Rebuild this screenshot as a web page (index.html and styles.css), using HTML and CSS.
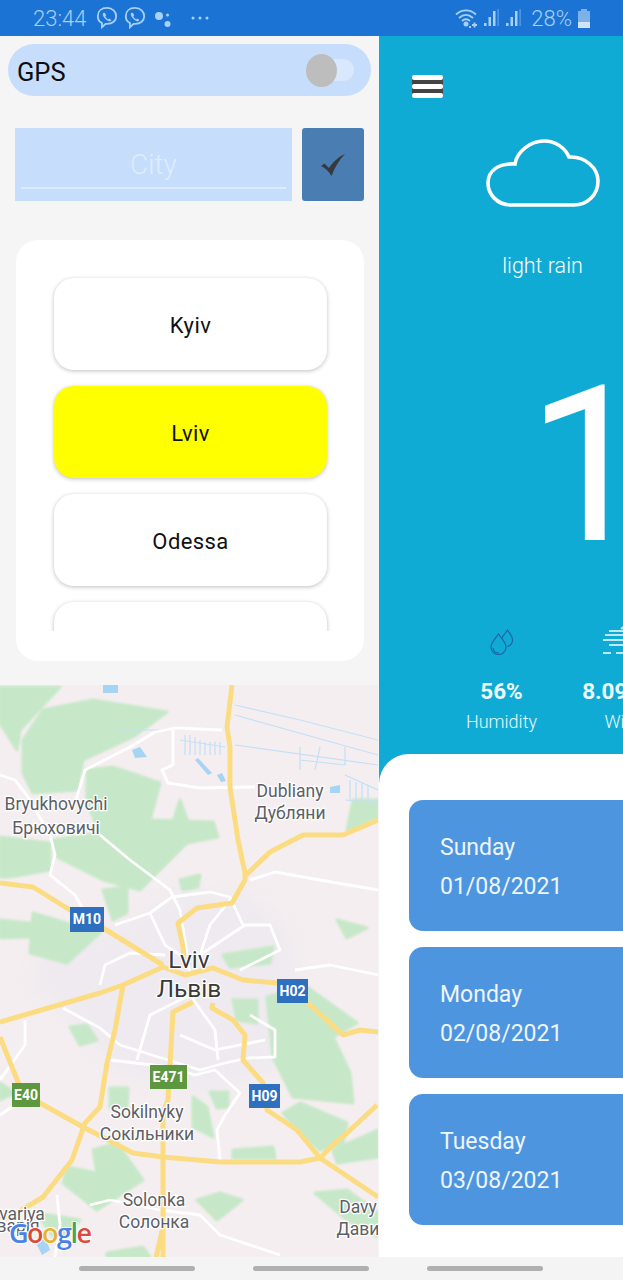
FILE: index.html
```html
<!DOCTYPE html>
<html lang="en">
  <head>
    <meta charset="utf-8" />
    <title>Weather</title>
    <link rel="stylesheet" href="styles.css">
  </head>
  <body>
    <header class="statusbar">
      <div class="status-left">
        <span class="clock">23:44</span>
        <svg class="viber" viewBox="0 0 24 26"><path d="M12 2C6 2 2 5.500 2 11c0 3.500 1.500 6 4.500 7.500V23l4-3.600h1.500c6 0 10-3.400 10-8.400S18 2 12 2z"/><path class="phone" d="M8 7.500c-1 1-.8 2.500.5 4.500s3.500 4 5.500 4.500c1.300.3 2.300-.3 2.700-1.300l-2.200-1.700-1.200 1c-1.400-.6-2.600-2-3.100-3.300l1-1.200L9.500 7.200c-.6-.1-1.100 0-1.500.3z"/></svg>
        <svg class="viber" viewBox="0 0 24 26"><path d="M12 2C6 2 2 5.500 2 11c0 3.500 1.500 6 4.500 7.500V23l4-3.600h1.500c6 0 10-3.400 10-8.400S18 2 12 2z"/><path class="phone" d="M8 7.500c-1 1-.8 2.500.5 4.500s3.500 4 5.500 4.500c1.300.3 2.300-.3 2.700-1.300l-2.200-1.700-1.200 1c-1.400-.6-2.600-2-3.100-3.300l1-1.200L9.500 7.200c-.6-.1-1.100 0-1.500.3z"/></svg>
        <svg class="assistant" viewBox="0 0 18 22"><circle cx="5" cy="8" r="4"/><circle cx="13.500" cy="7" r="1.500"/><circle cx="13.500" cy="16" r="3"/></svg>
        <svg class="more" viewBox="0 0 18 4"><circle cx="2" cy="2" r="1.500"/><circle cx="9" cy="2" r="1.500"/><circle cx="16" cy="2" r="1.500"/></svg>
      </div>
      <div class="status-right">
        <svg class="wifi" viewBox="0 0 24 20"><path d="M1 6.500C7 1 15 1 21 6.500M4 10c4.500-4 9.500-4 14 0M7 13c2.500-2.200 5.500-2.200 8 0"/><circle cx="11" cy="16" r="1.600"/><path d="M17 17h5M19.500 14.500v5M14 19h2"/></svg>
        <svg class="signal" viewBox="0 0 16 20"><rect x="0" y="15" width="2.500" height="3"/><rect x="4.500" y="9" width="2.500" height="9"/><rect x="9" y="3" width="2.500" height="15"/><rect x="13.500" y="1" width="1.200" height="17" opacity=".5"/></svg>
        <svg class="signal" viewBox="0 0 16 20"><rect x="0" y="15" width="2.500" height="3"/><rect x="4.500" y="9" width="2.500" height="9"/><rect x="9" y="3" width="2.500" height="15"/><rect x="13.500" y="1" width="1.200" height="17" opacity=".5"/></svg>
        <span class="battery-text">28%</span>
        <div class="battery"><div class="battery-nub"></div><div class="battery-body"><div class="battery-fill"></div></div></div>
      </div>
    </header>

    <div class="panes">
      <aside class="drawer">
        <div class="gps-row">
          <span>GPS</span>
          <div class="toggle"><div class="toggle-thumb"></div></div>
        </div>

        <form class="city-form">
          <div class="city-input"><span class="city-placeholder">City</span></div>
          <button class="city-ok" type="button">
            <svg viewBox="0 0 26 24"><path d="M1 13l3.500-2.500L9 15C13 9 18 4 25 1c-6 6-10 13-13.500 22C9 18.500 5 15 1 13z"/></svg>
          </button>
        </form>

        <div class="city-card">
          <div class="city-list">
            <div class="city-item">Kyiv</div>
            <div class="city-item selected">Lviv</div>
            <div class="city-item">Odessa</div>
            <div class="city-item"></div>
          </div>
        </div>

        <svg class="map" viewBox="0 0 378 572">
          <rect width="378" height="572" fill="#f5eef0"/>
          <path class="city-area" d="M110 245l70-40 70 5 40 40 10 60-20 70-70 30-90-20-50-60-40-30 10-30z"/>
          <g class="green">
            <polygon points="23,55 43,25 93,15 167,27 133,52 83,75 77,105 33,108 23,88"/>
            <polygon points="0,2 60,2 20,45 17,65 0,38"/>
            <polygon points="87,85 113,82 160,98 150,135 213,137 218,152 187,158 160,185 140,205 103,195 57,172 53,155 100,148 87,118"/>
            <polygon points="0,152 50,158 50,185 10,192 0,192"/>
            <polygon points="33,228 100,248 67,278 30,268"/>
            <polygon points="0,235 30,238 30,252 0,253"/>
            <polygon points="103,205 127,202 127,228 113,235"/>
            <polygon points="347,145 353,115 378,115 378,132"/>
            <polygon points="337,235 367,243 347,253"/>
            <polygon points="223,270 273,262 270,278 230,282"/>
            <polygon points="267,312 307,302 357,338 333,352 350,388 353,418 293,412 273,372"/>
            <polygon points="283,428 300,418 347,438 343,458 320,465 297,445"/>
            <polygon points="333,465 378,445 378,472 337,478"/>
            <polygon points="93,465 117,458 143,495 97,525 63,498 67,482 97,488"/>
            <polygon points="197,515 220,508 242,515 217,535"/>
            <polygon points="233,465 273,462 275,473 233,473"/>
            <polygon points="315,508 347,505 378,528 378,552 347,535"/>
            <polygon points="107,568 143,562 150,572 107,572"/>
            <polygon points="70,342 87,340 97,355 80,360"/>
            <polygon points="110,403 128,403 127,422 110,423"/>
            <polygon points="210,407 228,407 228,422 217,423"/>
            <polygon points="193,412 207,422 213,452 193,442"/>
            <polygon points="233,315 257,315 257,338 237,335"/>
            <polygon points="0,398 15,408 0,415"/>
            <polygon points="37,528 80,535 57,558"/>
            <polygon points="180,195 200,190 198,202 183,205"/>
            <polygon points="172,140 180,115 190,142 188,152"/>
          </g>
          <g class="water-lines">
            <path d="M235 20l65 15 78 20M235 30l143 40M180 55l45 7M235 60l143 20M300 62v23M320 62l-5 23M345 62v18M345 90l33 15M345 115l33 3"/>
            <path d="M185 50v20M190 50v20M195 52v18M200 55v15M205 57v13M210 57v13M215 57v13M220 57v13M350 95v20M356 97v20M362 98v20M368 100v18"/>
            <path d="M300 75l45 5M120 45h40"/>
          </g>
          <g class="water">
            <polygon points="103,0 118,0 118,8 103,8"/>
            <polygon points="132,65 140,62 147,72 135,73"/>
            <polygon points="195,75 198,73 212,88 208,90"/>
            <polygon points="217,90 222,88 226,96 221,97"/>
            <polygon points="330,102 340,100 340,108 330,108"/>
            <polygon points="37,560 45,552 50,565 42,570"/>
          </g>
          <g class="roads-small">
            <path d="M0 90l15 5 13 17 22 38 5 20-5 20 25 20 10 18"/>
            <path d="M75 118l10-33 45-23 25-15 20-4 47 2"/>
            <path d="M173 45v35l-11 5 6 13 32 5 55-1"/>
            <path d="M100 150l30 25 40 30 10 20 5 30 5 35"/>
            <path d="M250 195l25-8 45 8 58 10"/>
            <path d="M115 240l35-12 22-16 38-5 20 5 13 28h27l10 25-40 20"/>
            <path d="M150 228l15 32 15 10h20l10-30 20-25M200 270l45-30M295 285l35-5 48 10"/>
            <path d="M100 300l5-20 25-12 35 2"/>
            <path d="M63 323l22 12 15 8 20 17 80 25 25-7 23-5 27-1v-27l-25-15"/>
            <path d="M110 375l60 7 25 8 20-5 25 23-15 22-8 15 3 30"/>
            <path d="M137 375l13-45 40-20 25 35 3 30M180 350l35 15 50-10"/>
            <path d="M0 430l30-20M25 335v25l-25 35"/>
            <path d="M90 520l20-5 50 10 40 5 20 20 60 20M57 510l3 30-5 32"/>
          </g>
          <g class="roads">
            <path d="M232 0l-5 42 3 20v40l8 53 7 33v7l-13 23-35 5-19 15 5 24 2 20"/>
            <path d="M246 190l24-23 33-17h40l35-15"/>
            <path d="M0 198l33 4 37 23 33 18 60 37"/>
            <path d="M0 337l100-29 23-8 40-18 22 8 28-7 30 12 34 3"/>
            <path d="M123 300l-8 45-8 33-7 44-15 16-13 37-29 37-26 16-17 4"/>
            <path d="M0 352l20 50 20 16 43 24 50 26 30 4 57 5h80l20-4"/>
            <path d="M193 317l-20 10-5 88-5 13v144M156 572l7-30"/>
            <path d="M213 318l-1 5 21 12 12 15-2 25 20 23 4 27 30 20 23 28 58 39"/>
            <path d="M308 318l35 32 17-5 18 2"/>
            <path d="M320 473l15-15 12-10 30-28"/>
          </g>
          <g class="shield">
            <rect class="blue" x="70" y="222" width="34" height="25"/><text x="87" y="239">M10</text>
            <rect class="blue" x="277" y="294" width="31" height="24"/><text x="292.500" y="311">H02</text>
            <rect class="blue" x="249" y="399" width="31" height="24"/><text x="264.500" y="416">H09</text>
            <rect class="darkgreen" x="150" y="380" width="37" height="24"/><text x="168.500" y="397">E471</text>
            <rect class="darkgreen" x="12" y="398" width="28" height="24"/><text x="26" y="415">E40</text>
          </g>
          <g class="labels">
            <text x="56" y="125">Bryukhovychi</text>
            <text x="56" y="149">Брюховичі</text>
            <text x="290" y="112">Dubliany</text>
            <text x="290" y="134">Дубляни</text>
            <text x="147" y="433">Sokilnyky</text>
            <text x="147" y="455">Сокільники</text>
            <text x="154" y="521">Solonka</text>
            <text x="154" y="543">Солонка</text>
            <text x="358" y="528">Davy</text>
            <text x="358" y="550">Дави</text>
            <text x="22" y="535">variya</text>
            <text x="18" y="547">варія</text>
            <text class="city-label" x="189" y="283">Lviv</text>
            <text class="city-label" x="189" y="312">Львів</text>
          </g>
          <text class="google" x="9" y="558"><tspan fill="#4a80e8">G</tspan><tspan fill="#dc4a3d">o</tspan><tspan fill="#e8b32e">o</tspan><tspan fill="#4a80e8">g</tspan><tspan fill="#45a556">l</tspan><tspan fill="#dc4a3d">e</tspan></text>
        </svg>
      </aside>

      <main class="weather">
        <div class="menu-icon"><span></span><span></span><span></span></div>
        <svg class="cloud" viewBox="0 0 114 68"><path d="M25 66C11 66 2 55 2 44 2 32 12 24 29 25 31 12 45 2 58 2c12 0 21 7 25 16 16-1 29 11 29 24 0 14-11 24-24 24z"/></svg>
        <div class="condition">light rain</div>
        <div class="temp">1</div>

        <div class="stats">
          <div class="stat">
            <svg class="drop-icon" viewBox="0 0 26 26"><g class="drop"><path d="M9.500 5c3 4.500 7.500 8.500 7.500 13a7.500 7.500 0 0 1-15 0c0-4.500 4.500-8.500 7.500-13z"/><path d="M13 9c1-3 4-5 5.500-8 1.500 3 5 5.500 5 10 0 3.200-2 5.500-5 6.500"/><path d="M4 19c.5 3 3 5 6 5"/></g></svg>
            <div class="stat-value">56%</div>
            <div class="stat-label">Humidity</div>
          </div>
          <div class="stat">
            <svg class="wind-icon" viewBox="0 0 44 32"><g class="wind"><path d="M6 8h32M2 12h38M0 17h42M6 22h34M0 30h8M13 30h27M18 6l6-5"/></g></svg>
            <div class="stat-value">8.09m/s</div>
            <div class="stat-label">Wind</div>
          </div>
        </div>

        <section class="sheet">
          <div class="day-card"><div>Sunday</div><div>01/08/2021</div></div>
          <div class="day-card"><div>Monday</div><div>02/08/2021</div></div>
          <div class="day-card"><div>Tuesday</div><div>03/08/2021</div></div>
        </section>
      </main>
    </div>

    <footer class="navbar">
      <div class="handle"></div>
      <div class="handle"></div>
      <div class="handle"></div>
    </footer>
  </body>
</html>
```

FILE: styles.css
```css
* {
  box-sizing: border-box;
}

body {
  margin: 0;
  width: 623px;
  height: 1280px;
  overflow: hidden;
  display: flex;
  flex-direction: column;
  font-family: Roboto, "Liberation Sans", sans-serif;
  background-color: #f5f5f5;
}

/* status bar */
.statusbar {
  height: 36px;
  flex: none;
  display: flex;
  justify-content: space-between;
  align-items: center;
  padding: 0 33px;
  background-color: #1b74d4;
  color: #a8d0f8;
}

.status-left,
.status-right {
  display: flex;
  align-items: center;
}

.clock {
  font-size: 22px;
  font-weight: 300;
  margin-right: 10px;
}

.viber {
  width: 22px;
  height: 24px;
  margin-right: 6px;
  fill: none;
  stroke: #a8d0f8;
  stroke-width: 2;
}

.viber .phone {
  fill: #a8d0f8;
  stroke: none;
}

.assistant {
  width: 18px;
  height: 22px;
  margin: 2px 0 0 2px;
  fill: #a8d0f8;
}

.more {
  width: 18px;
  height: 4px;
  margin-left: 19px;
  fill: #a8d0f8;
}

.wifi {
  width: 24px;
  height: 20px;
  margin-right: 5px;
  fill: #a8d0f8;
  stroke: #a8d0f8;
  stroke-width: 1.800;
}

.wifi path {
  fill: none;
}

.signal {
  width: 16px;
  height: 20px;
  margin-right: 6px;
  fill: #a8d0f8;
}

.battery-text {
  font-size: 22px;
  font-weight: 300;
  margin: 0 6px 0 3px;
}

.battery {
  width: 12px;
  height: 19px;
  display: flex;
  flex-direction: column;
  align-items: center;
}

.battery-nub {
  width: 6px;
  height: 2px;
  background-color: #7eb1e8;
}

.battery-body {
  width: 100%;
  flex: 1;
  display: flex;
  align-items: flex-end;
  background-color: #7eb1e8;
}

.battery-fill {
  width: 100%;
  height: 6px;
  background-color: #cfe4fb;
}

/* two panes */
.panes {
  flex: 1;
  min-height: 0;
  display: flex;
}

.drawer {
  width: 379px;
  flex: none;
  display: flex;
  flex-direction: column;
  background-color: #f5f5f5;
}

.gps-row {
  height: 52px;
  margin: 8px 8px 0;
  padding: 3px 17px 0 9px;
  display: flex;
  justify-content: space-between;
  align-items: center;
  border-radius: 26px;
  background-color: #c6defc;
  font-size: 25.500px;
  color: #0c0c14;
}

.toggle {
  width: 48px;
  height: 22px;
  margin-top: -3px;
  display: flex;
  align-items: center;
  border-radius: 11px;
  background-color: #d9e8fd;
}

.toggle-thumb {
  width: 31px;
  height: 33px;
  border-radius: 50%;
  background-color: #bdbdbd;
}

.city-form {
  display: flex;
  gap: 10px;
  margin: 32px 15px 0;
  height: 73px;
}

.city-input {
  width: 277px;
  padding: 0 6px 12px;
  background-color: #c6defc;
  display: flex;
}

.city-placeholder {
  flex: 1;
  padding-top: 20px;
  border-bottom: 2px solid #e0ecfd;
  text-align: center;
  font-size: 28px;
  font-weight: 300;
  color: #dfecfd;
}

.city-ok {
  width: 62px;
  padding: 0;
  border: none;
  border-radius: 3px;
  display: flex;
  align-items: center;
  justify-content: center;
  background-color: #4a7eb3;
}

.city-ok svg {
  width: 28px;
  height: 24px;
  fill: #363a40;
}

.city-card {
  height: 421px;
  margin: 39px 15px 0 16px;
  padding: 30px 0;
  border-radius: 22px;
  background-color: #fff;
}

.city-list {
  height: 361px;
  padding: 8px 37px 0 38px;
  overflow: hidden;
  display: flex;
  flex-direction: column;
  gap: 16px;
}

.city-item {
  height: 92px;
  flex: none;
  padding-top: 2px;
  display: flex;
  align-items: center;
  justify-content: center;
  border-radius: 20px;
  background-color: #fff;
  box-shadow: 0 1px 4px rgba(0, 0, 0, 0.25);
  font-size: 22px;
  letter-spacing: 0.400px;
  color: #111;
}

.city-item.selected {
  background-color: #ffff00;
}

/* map */
.map {
  width: 378px;
  height: 572px;
  margin-top: 24px;
  flex: none;
}

.green {
  fill: #c6e8c8;
  stroke: #c6e8c8;
  stroke-width: 3;
  stroke-linejoin: round;
  filter: blur(1px);
}

.city-area {
  fill: #eeeaef;
  filter: blur(8px);
}

.water {
  fill: #a6d4f5;
}

.water-lines {
  fill: none;
  stroke: #c4e0f5;
  stroke-width: 1.200;
}

.roads-small {
  fill: none;
  stroke: #fff;
  stroke-width: 2.800;
  stroke-linejoin: round;
}

.roads {
  fill: none;
  stroke: #fcdc82;
  stroke-width: 5;
  stroke-linejoin: round;
}

.shield rect.blue {
  fill: #2f6fc0;
}

.shield rect.darkgreen {
  fill: #5d9740;
}

.shield text {
  fill: #fff;
  font-size: 14px;
  font-weight: 700;
  text-anchor: middle;
}

.labels text {
  fill: #5c6066;
  font-size: 17.500px;
  text-anchor: middle;
  stroke: #fff;
  stroke-width: 2.500;
  paint-order: stroke;
}

.labels .city-label {
  fill: #3a3a3c;
  font-size: 24.500px;
}

.google {
  font-family: "Open Sans", sans-serif;
  font-size: 27px;
  font-weight: 600;
  letter-spacing: -1.500px;
  stroke: #fff;
  stroke-width: 2;
  paint-order: stroke;
}

/* weather side */
.weather {
  flex: 1;
  min-width: 0;
  overflow: hidden;
  display: flex;
  flex-direction: column;
  background-color: #10abd5;
  color: #fff;
}

.menu-icon {
  width: 31px;
  height: 23px;
  margin: 39px 0 0 33px;
  flex: none;
  display: flex;
  flex-direction: column;
  justify-content: space-between;
  border-radius: 3px;
  background-color: #444;
}

.menu-icon span {
  height: 5px;
  border-radius: 2px;
  background-color: #fff;
}

.cloud {
  width: 114px;
  height: 68px;
  margin: 41px 0 0 107px;
  flex: none;
  fill: none;
  stroke: #fff;
  stroke-width: 3.600;
}

.condition {
  width: 327px;
  margin-top: 46px;
  text-align: center;
  font-size: 21.500px;
  font-weight: 300;
  color: #fff;
}

.temp {
  height: 224px;
  margin: 76px 0 0 148px;
  flex: none;
  font-size: 218px;
  font-weight: 400;
  line-height: 224px;
}

.stats {
  display: flex;
  flex: none;
  width: 400px;
  margin-top: 45px;
  padding-left: 61px;
}

.stat {
  width: 123px;
  display: flex;
  flex-direction: column;
  align-items: center;
  white-space: nowrap;
}

.drop-icon {
  width: 26px;
  height: 26px;
  margin-top: 6px;
}

.wind-icon {
  width: 44px;
  height: 32px;
}

.drop {
  fill: none;
  stroke: #1b64ad;
  stroke-width: 1.200;
}

.wind {
  fill: none;
  stroke: #bfe8f5;
  stroke-width: 2;
}

.stat-value {
  margin-top: 23px;
  font-size: 22.500px;
  font-weight: 700;
  color: #eefafd;
}

.stat-label {
  margin-top: 7px;
  font-size: 18px;
  font-weight: 300;
  color: #e9f8fc;
}

.sheet {
  flex: 1;
  width: 400px;
  margin-top: 22px;
  padding: 46px 0 0 30px;
  display: flex;
  flex-direction: column;
  gap: 16px;
  border-top-left-radius: 30px;
  background-color: #fff;
}

.day-card {
  height: 131px;
  flex: none;
  padding: 2px 0 0 31px;
  display: flex;
  flex-direction: column;
  justify-content: center;
  gap: 12px;
  border-radius: 14px;
  background-color: #4e95e0;
  font-size: 23px;
  font-weight: 400;
  color: #eef6fd;
}

/* bottom nav */
.navbar {
  height: 23px;
  flex: none;
  display: grid;
  grid-template-columns: 116px 116px 116px;
  column-gap: 58px;
  padding: 9px 0 0 79px;
  background-color: #f4f4f4;
}

.handle {
  height: 5px;
  border-radius: 3px;
  background-color: #b0b0b0;
}
```
